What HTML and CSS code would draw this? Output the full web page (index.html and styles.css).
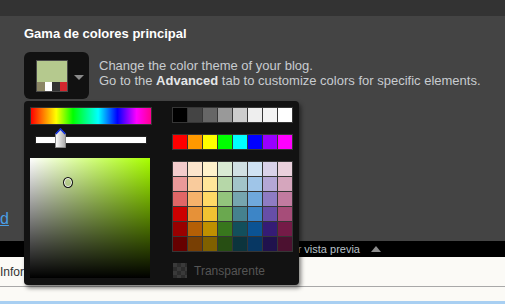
FILE: index.html
```html
<!DOCTYPE html>
<html lang="es">
<head>
  <meta charset="UTF-8">
  <title>Gama de colores</title>
  <link rel="stylesheet" href="styles.css">
</head>
<body>
  <div class="topbar"></div>

  <div class="panel">
    <h3 class="title">Gama de colores principal</h3>
    <div class="theme-row">
      <div class="theme-btn">
        <div class="swatch">
          <div class="swatch-main"></div>
          <div class="swatch-row">
            <span style="background:#8b8665"></span>
            <span style="background:#ffffff"></span>
            <span style="background:#333333"></span>
            <span style="background:#d3262e"></span>
          </div>
        </div>
        <div class="caret"></div>
      </div>
      <div class="desc">
        Change the color theme of your blog.<br>
        Go to the <b>Advanced</b> tab to customize colors for specific elements.
      </div>
    </div>
    <a class="adv-link" href="#">d</a>
  </div>

  <div class="preview-bar">
    <span>Ocultar vista previa</span>
    <i class="up"></i>
  </div>

  <div class="info">Infor</div>
  <div class="footer"></div>

  <!-- color picker popup -->
  <div class="picker">
    <div class="picker-left">
      <div class="hue"></div>
      <div class="slider">
        <svg class="thumb" width="11" height="20" viewBox="0 0 11 20">
          <defs>
            <linearGradient id="tg" x1="0" x2="1" y1="0" y2="0">
              <stop offset="0" stop-color="#ffffff"/>
              <stop offset="1" stop-color="#a9a9a9"/>
            </linearGradient>
          </defs>
          <path d="M0.5 6 L5.5 0.8 L10.5 6 L10.5 19.5 L0.5 19.5 Z" fill="url(#tg)" stroke="#888" stroke-width="1"/>
          <path d="M0.8 6 L5.5 1 L10.2 6" fill="none" stroke="#1030e0" stroke-width="1.6"/>
        </svg>
      </div>
      <div class="sv">
        <div class="marker"></div>
      </div>
    </div>

    <div class="picker-right">
      <div class="palette">
        <span style="background:#000000"></span><span style="background:#444444"></span><span style="background:#666666"></span><span style="background:#999999"></span><span style="background:#cccccc"></span><span style="background:#eeeeee"></span><span style="background:#f3f3f3"></span><span style="background:#ffffff"></span>
      </div>
      <div class="palette">
        <span style="background:#ff0000"></span><span style="background:#ff9900"></span><span style="background:#ffff00"></span><span style="background:#00ff00"></span><span style="background:#00ffff"></span><span style="background:#0000ff"></span><span style="background:#9900ff"></span><span style="background:#ff00ff"></span>
      </div>
      <div class="palette">
        <span style="background:#f4cccc"></span><span style="background:#fce5cd"></span><span style="background:#fff2cc"></span><span style="background:#d9ead3"></span><span style="background:#d0e0e3"></span><span style="background:#cfe2f3"></span><span style="background:#d9d2e9"></span><span style="background:#ead1dc"></span>
        <span style="background:#ea9999"></span><span style="background:#f9cb9c"></span><span style="background:#ffe599"></span><span style="background:#b6d7a8"></span><span style="background:#a2c4c9"></span><span style="background:#9fc5e8"></span><span style="background:#b4a7d6"></span><span style="background:#d5a6bd"></span>
        <span style="background:#e06666"></span><span style="background:#f6b26b"></span><span style="background:#ffd966"></span><span style="background:#93c47d"></span><span style="background:#76a5af"></span><span style="background:#6fa8dc"></span><span style="background:#8e7cc3"></span><span style="background:#c27ba0"></span>
        <span style="background:#cc0000"></span><span style="background:#e69138"></span><span style="background:#f1c232"></span><span style="background:#6aa84f"></span><span style="background:#45818e"></span><span style="background:#3d85c6"></span><span style="background:#674ea7"></span><span style="background:#a64d79"></span>
        <span style="background:#990000"></span><span style="background:#b45f06"></span><span style="background:#bf9000"></span><span style="background:#38761d"></span><span style="background:#134f5c"></span><span style="background:#0b5394"></span><span style="background:#351c75"></span><span style="background:#741b47"></span>
        <span style="background:#660000"></span><span style="background:#783f04"></span><span style="background:#7f6000"></span><span style="background:#274e13"></span><span style="background:#0c343d"></span><span style="background:#073763"></span><span style="background:#20124d"></span><span style="background:#4c1130"></span>
      </div>
      <div class="transparent">
        <span class="checker"></span>
        <span>Transparente</span>
      </div>
    </div>
  </div>
</body>
</html>
```

FILE: styles.css
```css
body {
  margin: 0;
  width: 505px;
  height: 304px;
  overflow: hidden;
  background: #444444;
  font-family: 'Liberation Sans', Arial, sans-serif;
  position: relative;
  display: flex;
  flex-direction: column;
}

.topbar {
  height: 16px;
  background: #333333;
}

.panel {
  height: 225px;
  display: flex;
  flex-direction: column;
}

.title {
  margin: 10px 0 0 24px;
  font-size: 13px;
  line-height: 16px;
  font-weight: bold;
  color: #ffffff;
}

.theme-row {
  display: flex;
  gap: 10px;
  margin: 10px 0 0 24px;
}

.theme-btn {
  width: 65px;
  height: 47px;
  background: #111111;
  border-radius: 6px;
  display: flex;
  align-items: flex-start;
}

.swatch {
  width: 30px;
  margin: 8px 0 0 12px;
  border: 1px solid #4a4a4a;
}

.swatch-main {
  height: 21px;
  background: #b5c98e;
}

.swatch-row {
  display: flex;
  height: 9px;
}

.swatch-row span {
  flex: 1;
}

.caret {
  margin: 23px 0 0 6px;
  width: 0;
  height: 0;
  border-left: 5px solid transparent;
  border-right: 5px solid transparent;
  border-top: 5px solid #8a8a8a;
}

.desc {
  margin-top: 6px;
  font-size: 13px;
  line-height: 15px;
  color: #c8ccd0;
}

.desc b {
  color: #e4e6e8;
}

.adv-link {
  margin-top: auto;
  margin-bottom: 13px;
  font-size: 16px;
  line-height: 18px;
  color: #4a9fe6;
  align-self: flex-start;
}

.preview-bar {
  height: 16px;
  background: #000000;
  display: flex;
  justify-content: flex-end;
  align-items: center;
  gap: 11px;
  padding-right: 124px;
  font-size: 11px;
  color: #b8c0c8;
}

.up {
  width: 0;
  height: 0;
  border-left: 5px solid transparent;
  border-right: 5px solid transparent;
  border-bottom: 6px solid #8c8c8c;
}

.info {
  height: 29px;
  background: #fbfaf6;
  border-bottom: 1px solid #a8a8a8;
  font-size: 12px;
  line-height: 14px;
  padding-top: 8px;
  box-sizing: border-box;
  height: 30px;
  color: #333333;
}

.footer {
  flex: 1;
  background: #fbfaf6;
  border-bottom: 3px solid #a8cff2;
}

/* popup */
.picker {
  position: absolute;
  left: 24px;
  top: 101px;
  width: 275px;
  height: 184px;
  box-sizing: border-box;
  padding: 6px;
  background: #121212;
  border-radius: 4px;
  box-shadow: 2px 3px 4px rgba(0, 0, 0, 0.5);
  display: flex;
  gap: 20px;
}

.picker-left {
  width: 122px;
}

.hue {
  height: 16px;
  border: 1px solid #333333;
  background: linear-gradient(to right, #ff0000 0%, #ffff00 21%, #00ff00 35%, #00ffff 56%, #0000ff 72%, #ff00ff 88%, #ff0090 100%);
}

.slider {
  position: relative;
  margin: 11px 5px 0;
  height: 6px;
  background: #ffffff;
  border: 1px solid #222222;
}

.thumb {
  position: absolute;
  left: 19px;
  top: -9px;
}

.sv {
  position: relative;
  width: 120px;
  height: 120px;
  margin-top: 14px;
  background: linear-gradient(to top, #000000, rgba(0, 0, 0, 0)), linear-gradient(to right, #ffffff, #a8ff00);
}

.marker {
  position: absolute;
  left: 33px;
  top: 19px;
  width: 8px;
  height: 9px;
  border: 1px solid #111111;
  border-radius: 50%;
  box-shadow: inset 0 0 0 1px #f4f4f4;
}

.picker-right {
  width: 121px;
}

.palette {
  display: grid;
  grid-template-columns: repeat(8, 14px);
  grid-auto-rows: 14px;
  gap: 1px;
  padding: 1px;
  background: #363636;
  margin-bottom: 11px;
}

.transparent {
  display: flex;
  align-items: center;
  gap: 7px;
  padding-left: 1px;
  font-size: 12px;
  color: #555555;
}

.checker {
  width: 14px;
  height: 15px;
  background-color: #3a3a3a;
  background-image: linear-gradient(45deg, #2c2c2c 25%, transparent 25%, transparent 75%, #2c2c2c 75%), linear-gradient(45deg, #2c2c2c 25%, transparent 25%, transparent 75%, #2c2c2c 75%);
  background-size: 8px 8px;
  background-position: 0 0, 4px 4px;
}
```
